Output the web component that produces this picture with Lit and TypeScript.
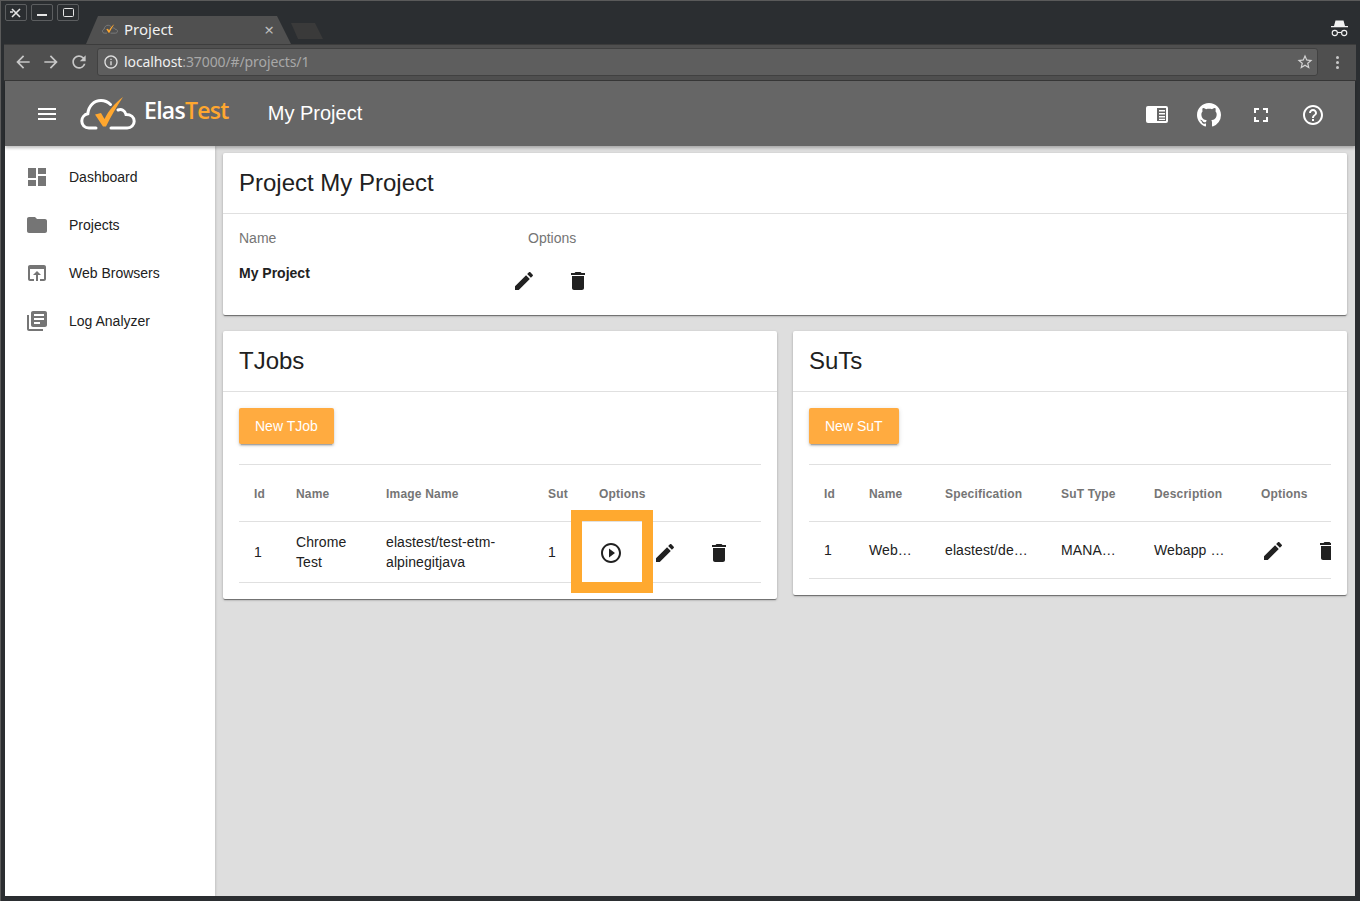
import { LitElement, html, css, svg } from "lit";
import { customElement } from "lit/decorators.js";

const ICONS: Record<string, string> = {
  dashboard: "M3 13h8V3H3v10zm0 8h8v-6H3v6zm10 0h8V11h-8v10zm0-18v6h8V3h-8z",
  folder: "M10 4H4c-1.1 0-1.99.9-1.99 2L2 18c0 1.1.9 2 2 2h16c1.1 0 2-.9 2-2V8c0-1.1-.9-2-2-2h-8l-2-2z",
  browser: "M19 4H5c-1.11 0-2 .9-2 2v12c0 1.1.89 2 2 2h4v-2H5V8h14v10h-4v2h4c1.1 0 2-.9 2-2V6c0-1.1-.89-2-2-2zm-7 6l-4 4h3v6h2v-6h3l-4-4z",
  library: "M4 6H2v14c0 1.1.9 2 2 2h14v-2H4V6zm16-4H8c-1.1 0-2 .9-2 2v12c0 1.1.9 2 2 2h12c1.1 0 2-.9 2-2V4c0-1.1-.9-2-2-2zm-1 9H9V9h10v2zm-4 4H9v-2h6v2zm4-8H9V5h10v2z",
  edit: "M3 17.25V21h3.75L17.81 9.94l-3.75-3.75L3 17.25zM20.71 7.04c.39-.39.39-1.02 0-1.41l-2.34-2.34c-.39-.39-1.02-.39-1.41 0l-1.83 1.83 3.75 3.75 1.83-1.83z",
  delete: "M6 19c0 1.1.9 2 2 2h8c1.1 0 2-.9 2-2V7H6v12zM19 4h-3.5l-1-1h-5l-1 1H5v2h14V4z",
  play: "M10 16.5l6-4.5-6-4.5v9zM12 2C6.48 2 2 6.48 2 12s4.48 10 10 10 10-4.48 10-10S17.52 2 12 2zm0 18c-4.41 0-8-3.59-8-8s3.59-8 8-8 8 3.59 8 8-3.59 8-8 8z",
  help: "M11 18h2v-2h-2v2zm1-16C6.48 2 2 6.48 2 12s4.48 10 10 10 10-4.48 10-10S17.52 2 12 2zm0 18c-4.41 0-8-3.59-8-8s3.59-8 8-8 8 3.59 8 8-3.59 8-8 8zm0-14c-2.21 0-4 1.79-4 4h2c0-1.1.9-2 2-2s2 .9 2 2c0 2-3 1.75-3 5h2c0-2.25 3-2.5 3-5 0-2.21-1.79-4-4-4z",
  fullscreen: "M7 14H5v5h5v-2H7v-3zm-2-4h2V7h3V5H5v5zm12 7h-3v2h5v-5h-2v3zM14 5v2h3v3h2V5h-5z",
  menu: "M3 18h18v-2H3v2zm0-5h18v-2H3v2zm0-7v2h18V6H3z",
  back: "M20 11H7.83l5.59-5.59L12 4l-8 8 8 8 1.41-1.41L7.83 13H20v-2z",
  forward: "M12 4l-1.41 1.41L16.17 11H4v2h12.17l-5.58 5.59L12 20l8-8z",
  reload: "M17.65 6.35A7.958 7.958 0 0012 4c-4.42 0-7.99 3.58-7.99 8s3.57 8 7.99 8c3.73 0 6.84-2.55 7.73-6h-2.08A5.99 5.99 0 0112 18c-3.31 0-6-2.69-6-6s2.69-6 6-6c1.66 0 3.14.69 4.22 1.78L13 11h7V4l-2.35 2.35z",
  info: "M11 17h2v-6h-2v6zm1-15C6.48 2 2 6.48 2 12s4.48 10 10 10 10-4.48 10-10S17.52 2 12 2zm0 18c-4.41 0-8-3.59-8-8s3.59-8 8-8 8 3.59 8 8-3.59 8-8 8zM11 9h2V7h-2v2z",
  star: "M22 9.24l-7.19-.62L12 2 9.19 8.63 2 9.24l5.46 4.73L5.82 21 12 17.27 18.18 21l-1.63-7.03L22 9.24zM12 15.4l-3.76 2.27 1-4.28-3.32-2.88 4.38-.38L12 6.1l1.71 4.04 4.38.38-3.32 2.88 1 4.28L12 15.4z",
};

const GITHUB =
  "M8 0C3.58 0 0 3.58 0 8c0 3.54 2.29 6.53 5.47 7.59.4.07.55-.17.55-.38 0-.19-.01-.82-.01-1.49-2.01.37-2.53-.49-2.69-.94-.09-.23-.48-.94-.82-1.13-.28-.15-.68-.52-.01-.53.63-.01 1.08.58 1.23.82.72 1.21 1.87.87 2.33.66.07-.52.28-.87.51-1.07-1.78-.2-3.64-.89-3.64-3.95 0-.87.31-1.59.82-2.15-.08-.2-.36-1.02.08-2.12 0 0 .67-.21 2.2.82.64-.18 1.32-.27 2-.27.68 0 1.36.09 2 .27 1.53-1.04 2.2-.82 2.2-.82.44 1.1.16 1.92.08 2.12.51.56.82 1.27.82 2.15 0 3.07-1.87 3.75-3.65 3.95.29.25.54.73.54 1.48 0 1.07-.01 1.93-.01 2.2 0 .21.15.46.55.38A8.013 8.013 0 0016 8c0-4.42-3.58-8-8-8z";

const icon = (name: string, size = 24) => html`<svg
  class="icon"
  width=${size}
  height=${size}
  viewBox="0 0 24 24"
  fill="currentColor"
>
  ${svg`<path d=${ICONS[name]}></path>`}
</svg>`;

const cloud = (w: number, h: number, stroke: string, sw: number) => html`<svg
  class="icon"
  width=${w}
  height=${h}
  viewBox="0 0 56 33"
  fill="none"
>
  <path
    d="M16 31H9C4.5 31 1.8 28 1.8 24c0-3.5 2.5-6.5 6-7.2C8.5 9 14 3.5 21 3.5c4 0 7 1.5 9.5 4M38 13c3.5-1.5 7 .5 8 4.5 5 0 8.2 3 8.2 6.8 0 3.7-3 6.7-7 6.7H31"
    stroke=${stroke}
    stroke-width=${sw}
    stroke-linecap="round"
  ></path>
  <path d="M15 17.5l6-1.5 3.5 6C29 13 35 6 43 0 37 9 31 19 26 29.5h-3z" fill="#ffa72f"></path>
</svg>`;

const NAV = [
  { icon: "dashboard", label: "Dashboard" },
  { icon: "folder", label: "Projects" },
  { icon: "browser", label: "Web Browsers" },
  { icon: "library", label: "Log Analyzer" },
];

@customElement("app-root")
export class AppRoot extends LitElement {
  static styles = css`
    :host {
      display: block;
      width: 1360px;
      height: 901px;
      overflow: hidden;
      background: #2b2e31;
      font-family: "Liberation Sans", Arial, sans-serif;
      color: #212121;
    }
    .icon {
      display: block;
      flex: none;
    }
    .window {
      display: flex;
      flex-direction: column;
      height: 901px;
      box-sizing: border-box;
      border-top: 1px solid #5a5a5a;
      border-left: 1px solid #5a5a5a;
    }

    /* browser chrome */
    .tabbar {
      position: relative;
      display: flex;
      height: 43px;
      flex: none;
    }
    .win-buttons {
      display: flex;
      gap: 4px;
      padding: 3px 0 0 4px;
    }
    .win-btn {
      display: flex;
      align-items: center;
      justify-content: center;
      box-sizing: border-box;
      width: 22px;
      height: 17px;
      border: 1px solid #5c5e60;
      border-radius: 2px;
      color: #e6e6e6;
    }
    .tab {
      display: flex;
      align-items: center;
      box-sizing: border-box;
      width: 205px;
      height: 28px;
      margin: 15px 0 0 7px;
      padding: 0 17px 2px 16px;
      background: #505050;
      clip-path: polygon(0 100%, 12px 0, 191px 0, 205px 100%);
      color: #f0f0f0;
      font: 15px "Noto Sans", sans-serif;
    }
    .tab .title {
      flex: 1;
      margin-left: 6px;
    }
    .tab .close {
      color: #bdbdbd;
      font-size: 17px;
      line-height: 1;
    }
    .new-tab {
      width: 32px;
      height: 16px;
      margin: 22px 0 0 0;
      background: #3a3a3a;
      clip-path: polygon(0 0, 24px 0, 32px 100%, 7px 100%);
    }
    .incognito {
      position: absolute;
      right: 12px;
      top: 19px;
      color: #f2f2f2;
    }
    .toolbar {
      display: flex;
      align-items: center;
      height: 37px;
      flex: none;
      margin-right: 4px;
      margin-left: 3px;
      padding-bottom: 1px;
      background: #4f4f4f;
      border-top: 1px solid #3c3c3c;
      border-bottom: 1px solid #373737;
      box-sizing: border-box;
      color: #c8c8c8;
    }
    .nav-btn {
      display: flex;
      width: 28px;
      justify-content: center;
    }
    .nav-btns {
      display: flex;
      padding-left: 5px;
    }
    .omnibox {
      display: flex;
      align-items: center;
      box-sizing: border-box;
      width: 1221px;
      height: 28px;
      margin-left: 4px;
      padding: 0 3px 0 5px;
      background: #5e5e5e;
      border: 1px solid #414141;
      border-radius: 3px;
      font: 14px "Noto Sans", sans-serif;
      letter-spacing: -0.1px;
      color: #d4d4d4;
    }
    .omnibox .icon:first-child {
      color: #e0e0e0;
    }
    .omnibox .url {
      flex: 1;
      margin-left: 5px;
      padding-bottom: 2px;
      color: #a8a8a8;
    }
    .omnibox .host {
      color: #f0f0f0;
    }
    .dots {
      display: flex;
      flex-direction: column;
      gap: 2px;
      margin-left: 18px;
    }
    .dots i {
      width: 3px;
      height: 3px;
      border-radius: 50%;
      background: #c8c8c8;
    }

    /* page */
    .page {
      display: flex;
      flex-direction: column;
      flex: 1;
      min-height: 0;
      margin: 0 5px 5px 4px;
      background: #dedede;
    }
    .app-bar {
      display: flex;
      align-items: center;
      height: 65px;
      flex: none;
      padding: 0 0 0 30px;
      background: #666666;
      color: #fff;
      box-shadow: 0 2px 3px rgba(0, 0, 0, 0.25);
      z-index: 2;
      position: relative;
    }
    .logo {
      display: flex;
      align-items: center;
      margin-left: 21px;
    }
    .logo-text {
      margin: 0 0 8px 8px;
      font: 600 23px "Open Sans", sans-serif;
      letter-spacing: -0.7px;
    }
    .logo-text span {
      color: #ffa72f;
    }
    .app-title {
      margin-left: 39px;
      font-size: 20px;
    }
    .app-actions {
      display: flex;
      align-items: center;
      margin-left: auto;
      padding: 2px 30px 0 0;
      gap: 28px;
    }
    .panel-icon {
      display: block;
    }
    .body {
      display: flex;
      flex: 1;
      min-height: 0;
    }
    .sidebar {
      width: 210px;
      flex: none;
      box-sizing: border-box;
      padding-top: 7px;
      background: #fff;
      box-shadow: 1px 0 2px rgba(0, 0, 0, 0.12);
    }
    .nav-item {
      display: flex;
      align-items: center;
      gap: 20px;
      height: 48px;
      padding-left: 20px;
      font-size: 14px;
      color: #212121;
    }
    .nav-item .icon {
      color: #757575;
    }
    .content {
      flex: 1;
      min-width: 0;
      padding: 7px 8px 0;
      display: flex;
      flex-direction: column;
      gap: 16px;
    }
    .card {
      background: #fff;
      border-radius: 2px;
      box-shadow: 0 2px 1px -1px rgba(0, 0, 0, 0.3), 0 1px 1px 0 rgba(0, 0, 0, 0.2),
        0 1px 3px 0 rgba(0, 0, 0, 0.2);
    }
    .card-title {
      display: flex;
      align-items: center;
      height: 60px;
      padding: 0 16px;
      font-size: 24px;
      border-bottom: 1px solid #e0e0e0;
    }
    .project-body {
      display: grid;
      grid-template-columns: 258px 54px 54px;
      grid-template-rows: 49px 52px;
      height: 101px;
      padding: 0 16px;
      font-size: 14px;
    }
    .project-body .lbl {
      padding-top: 16px;
      color: #757575;
    }
    .project-body .lbl.opts {
      grid-column: 2 / 4;
      padding-left: 31px;
    }
    .project-body .name {
      font-weight: bold;
      padding-top: 2px;
    }
    .project-body .act {
      display: flex;
      justify-content: center;
      padding-top: 6px;
    }
    .columns {
      display: flex;
      gap: 16px;
      align-items: flex-start;
    }
    .columns .card {
      flex: 1;
      min-width: 0;
    }
    .card-body {
      padding: 16px 16px 16px;
    }
    .btn {
      display: inline-flex;
      align-items: center;
      height: 36px;
      padding: 0 16px;
      background: #ffab40;
      color: #fff;
      font-size: 14px;
      border-radius: 2px;
      box-shadow: 0 3px 1px -2px rgba(0, 0, 0, 0.2), 0 2px 2px 0 rgba(0, 0, 0, 0.14),
        0 1px 5px 0 rgba(0, 0, 0, 0.12);
    }
    .table {
      margin-top: 20px;
      border-top: 1px solid #e0e0e0;
    }
    .row {
      display: grid;
      align-items: center;
      border-bottom: 1px solid #e0e0e0;
      font-size: 14px;
      line-height: 20px;
      letter-spacing: 0.1px;
    }
    .head {
      height: 57px;
      box-sizing: border-box;
      padding-top: 2px;
      font-size: 12px;
      font-weight: bold;
      letter-spacing: 0.2px;
      color: #757575;
    }
    .tjobs .row {
      grid-template-columns: 42px 90px 162px 51px 1fr;
      padding-left: 15px;
    }
    .tjobs .data {
      height: 61px;
      box-sizing: border-box;
    }
    .suts {
      overflow: hidden;
    }
    .suts .row {
      grid-template-columns: 45px 76px 116px 93px 107px 1fr;
      padding-left: 15px;
    }
    .suts .data {
      height: 57px;
      box-sizing: border-box;
    }
    .options {
      display: flex;
      align-items: center;
      gap: 30px;
      padding-top: 2px;
    }
    .play {
      position: relative;
      display: flex;
    }
    .highlight {
      position: absolute;
      left: -28px;
      top: -31px;
      width: 82px;
      height: 83px;
      box-sizing: border-box;
      border: 11px solid #ffa92f;
    }
  `;

  render() {
    return html`
      <div class="window">
        ${this.renderTabBar()} ${this.renderToolbar()}
        <div class="page">
          ${this.renderAppBar()}
          <div class="body">
            <nav class="sidebar">
              ${NAV.map(
                (n) => html`<div class="nav-item">${icon(n.icon)}<span>${n.label}</span></div>`
              )}
            </nav>
            <main class="content">
              <section class="card">
                <div class="card-title">Project My Project</div>
                <div class="project-body">
                  <div class="lbl">Name</div>
                  <div class="lbl opts">Options</div>
                  <div class="name">My Project</div>
                  <div class="act">${icon("edit")}</div>
                  <div class="act">${icon("delete")}</div>
                </div>
              </section>
              <div class="columns">
                <section class="card">
                  <div class="card-title">TJobs</div>
                  <div class="card-body">
                    <span class="btn">New TJob</span>
                    <div class="table tjobs">
                      <div class="row head">
                        <span>Id</span><span>Name</span><span>Image Name</span><span>Sut</span><span>Options</span>
                      </div>
                      <div class="row data">
                        <span>1</span>
                        <span>Chrome<br />Test</span>
                        <span>elastest/test-etm-<br />alpinegitjava</span>
                        <span>1</span>
                        <div class="options">
                          <div class="play">${icon("play")}<div class="highlight"></div></div>
                          ${icon("edit")} ${icon("delete")}
                        </div>
                      </div>
                    </div>
                  </div>
                </section>
                <section class="card">
                  <div class="card-title">SuTs</div>
                  <div class="card-body">
                    <span class="btn">New SuT</span>
                    <div class="table suts">
                      <div class="row head">
                        <span>Id</span><span>Name</span><span>Specification</span><span>SuT Type</span><span>Description</span><span>Options</span>
                      </div>
                      <div class="row data">
                        <span>1</span>
                        <span>Web…</span>
                        <span>elastest/de…</span>
                        <span>MANA…</span>
                        <span>Webapp …</span>
                        <div class="options">${icon("edit")} ${icon("delete")}</div>
                      </div>
                    </div>
                  </div>
                </section>
              </div>
            </main>
          </div>
        </div>
      </div>
    `;
  }

  renderTabBar() {
    return html`
      <div class="tabbar">
        <div class="win-buttons">
          <div class="win-btn">
            <svg width="12" height="10" viewBox="0 0 12 10" stroke="currentColor" stroke-width="1.6" fill="none">
              <path d="M2 1l8 8M10 1L2 9M0 4h3"></path>
            </svg>
          </div>
          <div class="win-btn">
            <svg width="10" height="10" viewBox="0 0 10 10" fill="currentColor"><rect y="6" width="10" height="2"></rect></svg>
          </div>
          <div class="win-btn">
            <svg width="11" height="9" viewBox="0 0 11 9" fill="none" stroke="currentColor"><rect x=".5" y=".5" width="10" height="8" rx="1"></rect></svg>
          </div>
        </div>
        <div class="tab">
          ${cloud(16, 10, "#8a8a8a", 2.5)}
          <span class="title">Project</span>
          <span class="close">×</span>
        </div>
        <div class="new-tab"></div>
        <svg class="incognito" width="17" height="17" viewBox="0 0 17 17" fill="currentColor">
          <path d="M4.5 .5h8L14 6H3zM0 6h17v1.2H0z"></path>
          <g fill="none" stroke="currentColor" stroke-width="1.1">
            <circle cx="3.8" cy="13" r="2.6"></circle>
            <circle cx="13.2" cy="13" r="2.6"></circle>
            <path d="M6.4 12.5h4.2"></path>
          </g>
        </svg>
      </div>
    `;
  }

  renderToolbar() {
    return html`
      <div class="toolbar">
        <div class="nav-btns">
          <span class="nav-btn">${icon("back", 20)}</span>
          <span class="nav-btn">${icon("forward", 20)}</span>
          <span class="nav-btn">${icon("reload", 20)}</span>
        </div>
        <div class="omnibox">
          ${icon("info", 16)}
          <span class="url"><span class="host">localhost</span>:37000/#/projects/1</span>
          ${icon("star", 18)}
        </div>
        <div class="dots"><i></i><i></i><i></i></div>
      </div>
    `;
  }

  renderAppBar() {
    return html`
      <header class="app-bar">
        ${icon("menu")}
        <div class="logo">
          ${cloud(56, 33, "#fff", 3)}
          <span class="logo-text">Elas<span>Test</span></span>
        </div>
        <span class="app-title">My Project</span>
        <div class="app-actions">
          <svg class="panel-icon" width="24" height="24" viewBox="0 0 24 24">
            <rect x="1" y="3" width="22" height="17" rx="2" fill="#fff"></rect>
            <rect x="12" y="5" width="9" height="13" fill="#666"></rect>
            <path d="M14 7h6v1.6h-6zM14 10h6v1.6h-6zM14 13h6v1.6h-6zM14 15.8h6v1.2h-6z" fill="#fff"></path>
          </svg>
          <svg width="24" height="24" viewBox="0 0 16 16" fill="#fff"><path d=${GITHUB}></path></svg>
          ${icon("fullscreen")} ${icon("help")}
        </div>
      </header>
    `;
  }
}
